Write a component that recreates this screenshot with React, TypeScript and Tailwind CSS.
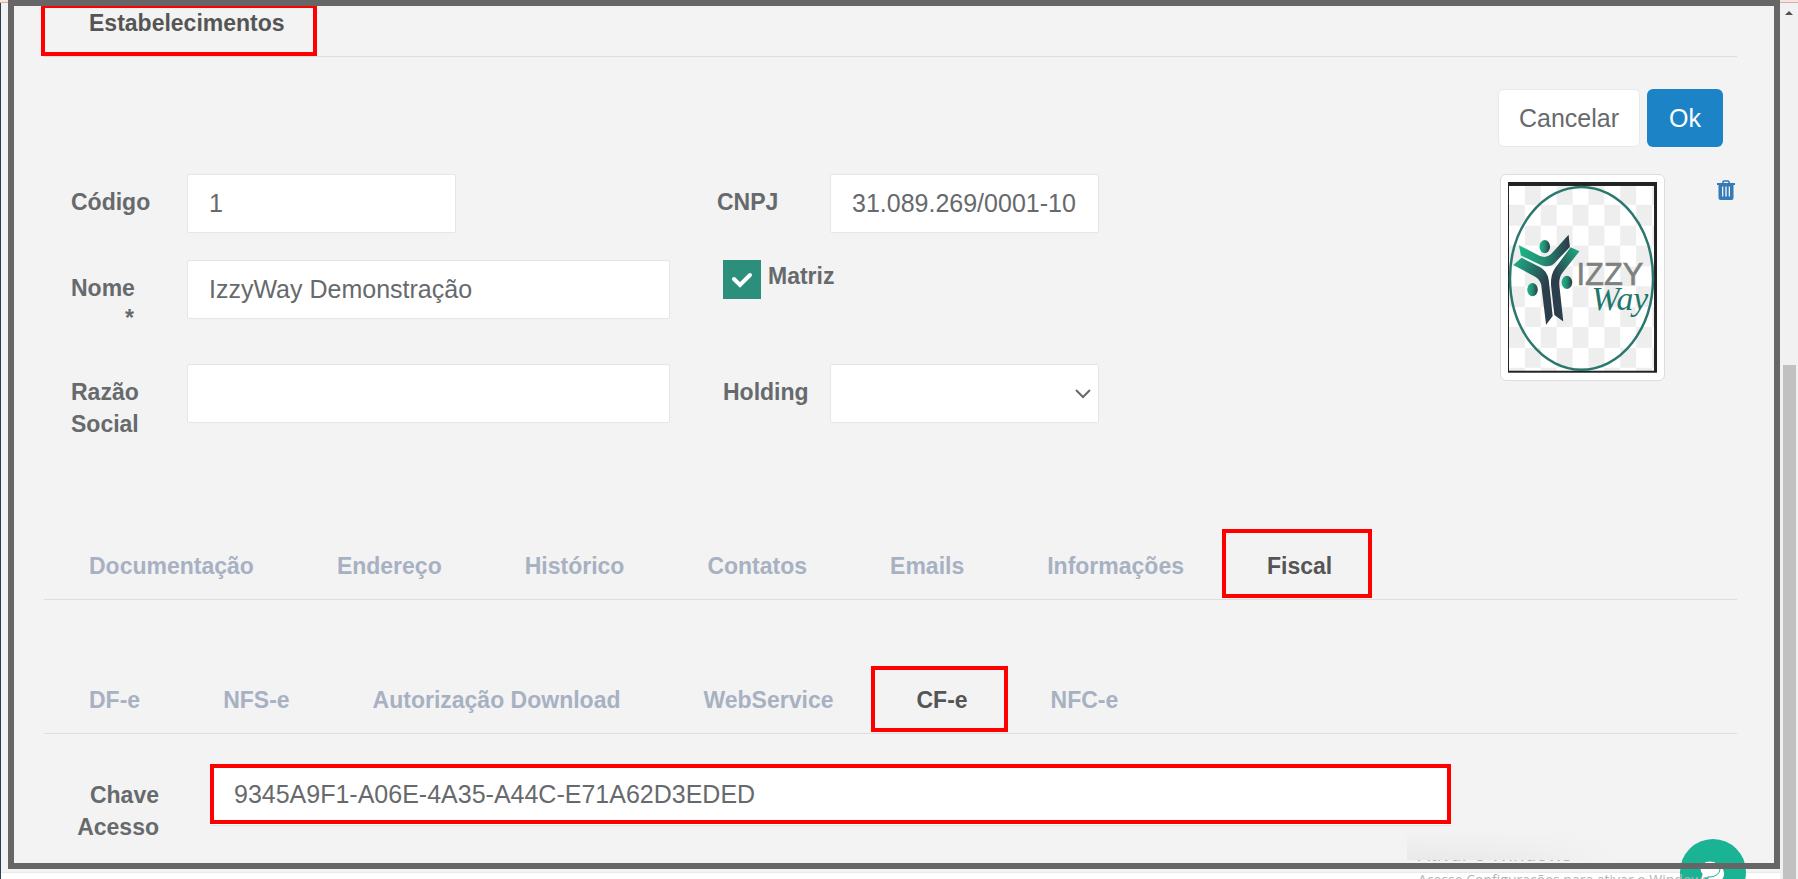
import { useState } from "react";

const LABEL = "text-[23px] leading-8 font-bold text-[#676a6c]";
const FIELD =
  "block w-full h-[59px] rounded-xs border border-[#e5e6e7] bg-white px-[21px] text-[25px] text-[#676a6c] outline-none";

const mainTabs = ["Documentação", "Endereço", "Histórico", "Contatos", "Emails", "Informações", "Fiscal"];
const fiscalTabs = ["DF-e", "NFS-e", "Autorização Download", "WebService", "CF-e", "NFC-e"];

type TabsProps = {
  items: string[];
  initial: string;
  label: string;
  tabClass: string;
};

function Tabs({ items, initial, label, tabClass }: TabsProps) {
  const [active, setActive] = useState(initial);

  return (
    <div role="tablist" aria-label={label} className="flex items-end border-b border-[#dddddd] pl-1 pb-px">
      {items.map((item) => (
        <button
          key={item}
          role="tab"
          aria-selected={item === active}
          onClick={() => setActive(item)}
          className={`${tabClass} ${
            item === active
              ? "-ml-1 mr-[2px] border-4 border-[#ff0000] pl-[41px] pr-9 pb-[13px] text-[23px] leading-[30px] font-bold text-[#555555]"
              : "pl-[41px] pr-[42px] pb-[17px] text-[23px] leading-[30px] font-bold text-[#a7b1c2]"
          }`}
        >
          {item}
        </button>
      ))}
    </div>
  );
}

function Logo() {
  return (
    <svg viewBox="0 0 150 192" className="block w-full" role="img" aria-label="IzzyWay">
      <defs>
        <pattern id="checker" x="1" y="3" width="32" height="41" patternUnits="userSpaceOnUse">
          <rect width="32" height="41" fill="#ffffff" />
          <rect x="16" width="16" height="20" fill="#eeeeee" />
          <rect y="20" width="16" height="21" fill="#eeeeee" />
        </pattern>
        <linearGradient id="arm" x1="0" y1="0" x2="1" y2="0">
          <stop offset="0" stopColor="#1cb488" />
          <stop offset="0.45" stopColor="#239275" />
          <stop offset="1" stopColor="#2c3848" />
        </linearGradient>
        <linearGradient id="legLeft" x1="0" y1="0" x2="1" y2="0.7">
          <stop offset="0" stopColor="#1cb488" />
          <stop offset="0.75" stopColor="#2c3e4c" />
        </linearGradient>
        <linearGradient id="legRight" x1="0.9" y1="0" x2="0.3" y2="1">
          <stop offset="0" stopColor="#1fa880" />
          <stop offset="0.6" stopColor="#2c3e4c" />
        </linearGradient>
      </defs>
      <rect width="150" height="192" fill="#222222" />
      <rect x="1" y="4" width="146" height="186" fill="url(#checker)" />
      <ellipse cx="74" cy="97" rx="72" ry="92" fill="none" stroke="#2a776d" strokeWidth="2.5" />
      <g transform="scale(0.3333) translate(-81 -66)">
        <path d="M114 257 L176 289 Q196 298 212 283 L264 225 L268 262 L222 311 Q206 327 180 317 L120 288 Z" fill="url(#arm)" />
        <path d="M97 317 L122 295 L177 323 Q200 335 204 362 L216 471 L196 497 L182 382 Q180 362 163 352 Z" fill="url(#legLeft)" />
        <path d="M270 263 L297 275 L246 339 Q234 354 236 378 L248 487 L221 468 L211 378 Q209 346 224 325 Z" fill="url(#legRight)" />
        <ellipse cx="192" cy="261" rx="16" ry="20" fill="url(#arm)" />
        <ellipse cx="155" cy="391" rx="16" ry="20" fill="url(#arm)" />
        <ellipse cx="259" cy="369" rx="16" ry="20" fill="url(#arm)" />
      </g>
      <text x="69" y="104" fontSize="31" fill="#7d827e" stroke="#7d827e" strokeWidth="0.6" fontFamily="'Liberation Sans', sans-serif">
        IZZY
      </text>
      <text x="84" y="129" fontSize="34" fontStyle="italic" fill="#1f776c" fontFamily="'Liberation Serif', serif">
        Way
      </text>
    </svg>
  );
}

function TrashIcon() {
  return (
    <svg viewBox="0 0 18 20" className="h-5 w-[18px]" aria-hidden="true">
      <path d="M6 3.5 V2 Q6 1 7 1 H11 Q12 1 12 2 V3.5" fill="none" stroke="#337ab7" strokeWidth="1.6" />
      <path
        fillRule="evenodd"
        fill="#337ab7"
        d="M0 3 H18 V5 H16.5 V18 Q16.5 20 14.5 20 H3.5 Q1.5 20 1.5 18 V5 H0 Z M5 6.5 V16.5 H6.3 V6.5 Z M8.3 6.5 V16.5 H9.7 V6.5 Z M11.7 6.5 V16.5 H13 V6.5 Z"
      />
    </svg>
  );
}

export default function App() {
  const [matriz, setMatriz] = useState(true);

  return (
    <div className="relative flex h-screen overflow-hidden bg-[#f3f3f3] font-['Liberation_Sans',Arial,sans-serif]">
      {/* faixa do navegador */}
      <div className="absolute inset-x-0 top-0 h-[3px] border-b border-[#c9b3ad] bg-[#fbe3dc]" />
      <div className="mt-[3px] w-px shrink-0 bg-[#2f4050]" />

      <div className="flex min-w-0 flex-1 flex-col">
        <main className="min-h-0 flex-1 overflow-hidden pl-10 pr-[43px]">
          {/* ABA PRINCIPAL */}
          <div role="tablist" aria-label="Cadastro" className="ml-[3px] border-b border-[#dddddd] pt-1">
            <button
              role="tab"
              aria-selected="true"
              className="-ml-[3px] block border-4 border-[#ff0000] pb-[14px] pl-[44px] pr-7 text-[23px] leading-[30px] font-bold text-[#555555]"
            >
              Estabelecimentos
            </button>
          </div>

          <form className="ml-[3px]" onSubmit={(e) => e.preventDefault()}>
            <div className="mt-8 flex justify-end gap-[7px] pr-[14px]">
              <button type="button" className="h-[58px] rounded-md border border-[#e7eaec] bg-white px-5 pt-0.5 text-[25px] text-[#676a6c]">
                Cancelar
              </button>
              <button type="submit" className="h-[58px] rounded-md bg-[#1c84c6] px-[22px] pt-0.5 text-[25px] text-white">
                Ok
              </button>
            </div>

            {/* DADOS */}
            <div className="mt-[27px] grid grid-cols-[1456fr_237fr]">
              <div>
                <div className="grid min-h-[86px] grid-cols-[143fr_269fr_214fr_160fr_269fr_401fr] items-start">
                  <label htmlFor="codigo" className={`${LABEL} pl-[27px] pt-3`}>Código</label>
                  <input id="codigo" defaultValue="1" className={FIELD} />
                  <label htmlFor="cnpj" className={`${LABEL} col-start-4 pl-[47px] pt-3`}>CNPJ</label>
                  <input id="cnpj" defaultValue="31.089.269/0001-10" className={FIELD} />
                </div>

                <div className="grid min-h-[104px] grid-cols-[143fr_483fr_830fr] items-start">
                  <label htmlFor="nome" className={`${LABEL} flex flex-col pl-[27px] pt-3`}>
                    Nome
                    <span className="pr-[53px] text-right leading-7">*</span>
                  </label>
                  <input id="nome" defaultValue="IzzyWay Demonstração" className={FIELD} />
                  <label className={`${LABEL} ml-[53px] flex items-start gap-[7px]`}>
                    <span className="relative block h-[39px] w-[38px]">
                      <input
                        type="checkbox"
                        checked={matriz}
                        onChange={(e) => setMatriz(e.target.checked)}
                        className="block h-full w-full appearance-none bg-white checked:bg-[#2b8f7b]"
                      />
                      {matriz && (
                        <svg viewBox="0 0 38 39" className="pointer-events-none absolute inset-0" aria-hidden="true">
                          <path d="M11 19 L17 25 L27 15" fill="none" stroke="#ffffff" strokeWidth="4" strokeLinecap="round" />
                        </svg>
                      )}
                    </span>
                    Matriz
                  </label>
                </div>

                <div className="grid grid-cols-[143fr_483fr_160fr_269fr_401fr] items-start">
                  <label htmlFor="razao" className={`${LABEL} w-[110px] pl-[27px] pt-3`}>Razão Social</label>
                  <input id="razao" className={FIELD} />
                  <label htmlFor="holding" className={`${LABEL} pl-[53px] pt-3`}>Holding</label>
                  <div className="relative">
                    <select id="holding" className={`${FIELD} appearance-none`}>
                      <option value=""></option>
                    </select>
                    <svg viewBox="0 0 16 10" className="pointer-events-none absolute right-2 top-[25px] w-4" aria-hidden="true">
                      <path d="M1 1 L8 8 L15 1" fill="none" stroke="#676a6c" strokeWidth="2" />
                    </svg>
                  </div>
                </div>
              </div>

              <div className="flex items-start justify-between">
                <div className="w-[165px] rounded-md border border-[#dddddd] bg-white px-[7px] py-[7px]">
                  <Logo />
                </div>
                <button type="button" aria-label="Remover imagem" className="mr-[2px] mt-[6px]">
                  <TrashIcon />
                </button>
              </div>
            </div>

            {/* ABAS */}
            <div className="mt-[89px]">
              <Tabs items={mainTabs} initial="Fiscal" label="Seções" tabClass="pt-[18px]" />
            </div>
            <div className="mt-[66px]">
              <Tabs items={fiscalTabs} initial="CF-e" label="Documentos fiscais" tabClass="pt-[15px]" />
            </div>

            <div className="mt-[30px] grid grid-cols-[166fr_1241fr_286fr] items-start">
              <label htmlFor="chave" className={`${LABEL} w-[115px] pl-5 pt-[15px] text-right`}>Chave Acesso</label>
              <input
                id="chave"
                defaultValue="9345A9F1-A06E-4A35-A44C-E71A62D3EDED"
                className="block h-[60px] w-full border-4 border-[#ff0000] bg-white px-5 text-[25px] text-[#676a6c] shadow-[0_1px_0_#ffffff,0_2px_0_#e5e6e7] outline-none"
              />
            </div>
          </form>
        </main>
        <footer className="h-[7px] shrink-0 border-t border-[#e7eaec] bg-white" />
      </div>

      {/* BARRA DE ROLAGEM */}
      <div className="relative mt-[3px] flex w-[18px] shrink-0 flex-col items-center bg-[#f1f1f1] pt-2">
        <svg viewBox="0 0 8 4" className="w-2" aria-hidden="true">
          <path d="M4 0 L8 4 H0 Z" fill="#505050" />
        </svg>
        <div className="absolute bottom-0 right-[2px] top-[362px] w-[13px] bg-[#c1c1c1]" />
      </div>

      {/* CHAT */}
      <button
        type="button"
        aria-label="Abrir chat"
        className="absolute -bottom-[26px] right-[52px] flex h-[66px] w-[66px] items-start justify-center rounded-full bg-[#1ab394] pt-[22px]"
      >
        <svg viewBox="0 0 28 24" className="w-7" aria-hidden="true">
          <path d="M17 4 Q26 6 25 14 Q25 17 22 19 L23 23 L17 20 Q12 21 9 18" fill="#ffffff" />
          <ellipse cx="11" cy="8" rx="10" ry="8" fill="#ffffff" stroke="#1ab394" strokeWidth="1" />
          <path d="M4 12 L2 19 L10 15 Z" fill="#ffffff" />
        </svg>
      </button>

      {/* marca d'agua do sistema */}
      <div className="pointer-events-none absolute bottom-0 right-0 h-[49px] w-[391px] overflow-hidden font-['Open_Sans',sans-serif] whitespace-nowrap text-[#b4b4b4]">
        <div className="absolute left-[11px] top-[10px] text-[19px] leading-7">Ativar o Windows</div>
        <div className="absolute left-[11px] top-10 text-[14px] leading-5">Acesse Configurações para ativar o Windows.</div>
        <div className="absolute left-0 top-0 h-[30px] w-[210px] bg-linear-to-r from-[#e9e9e9] via-[#ececec] to-[#f3f3f3]">
          <div className="h-full bg-linear-to-b from-[#f3f3f3] to-transparent" />
        </div>
      </div>

      {/* MOLDURA */}
      <div className="pointer-events-none absolute bottom-[10px] left-2 right-[18px] top-0 border-6 border-[#666666]" />
    </div>
  );
}
